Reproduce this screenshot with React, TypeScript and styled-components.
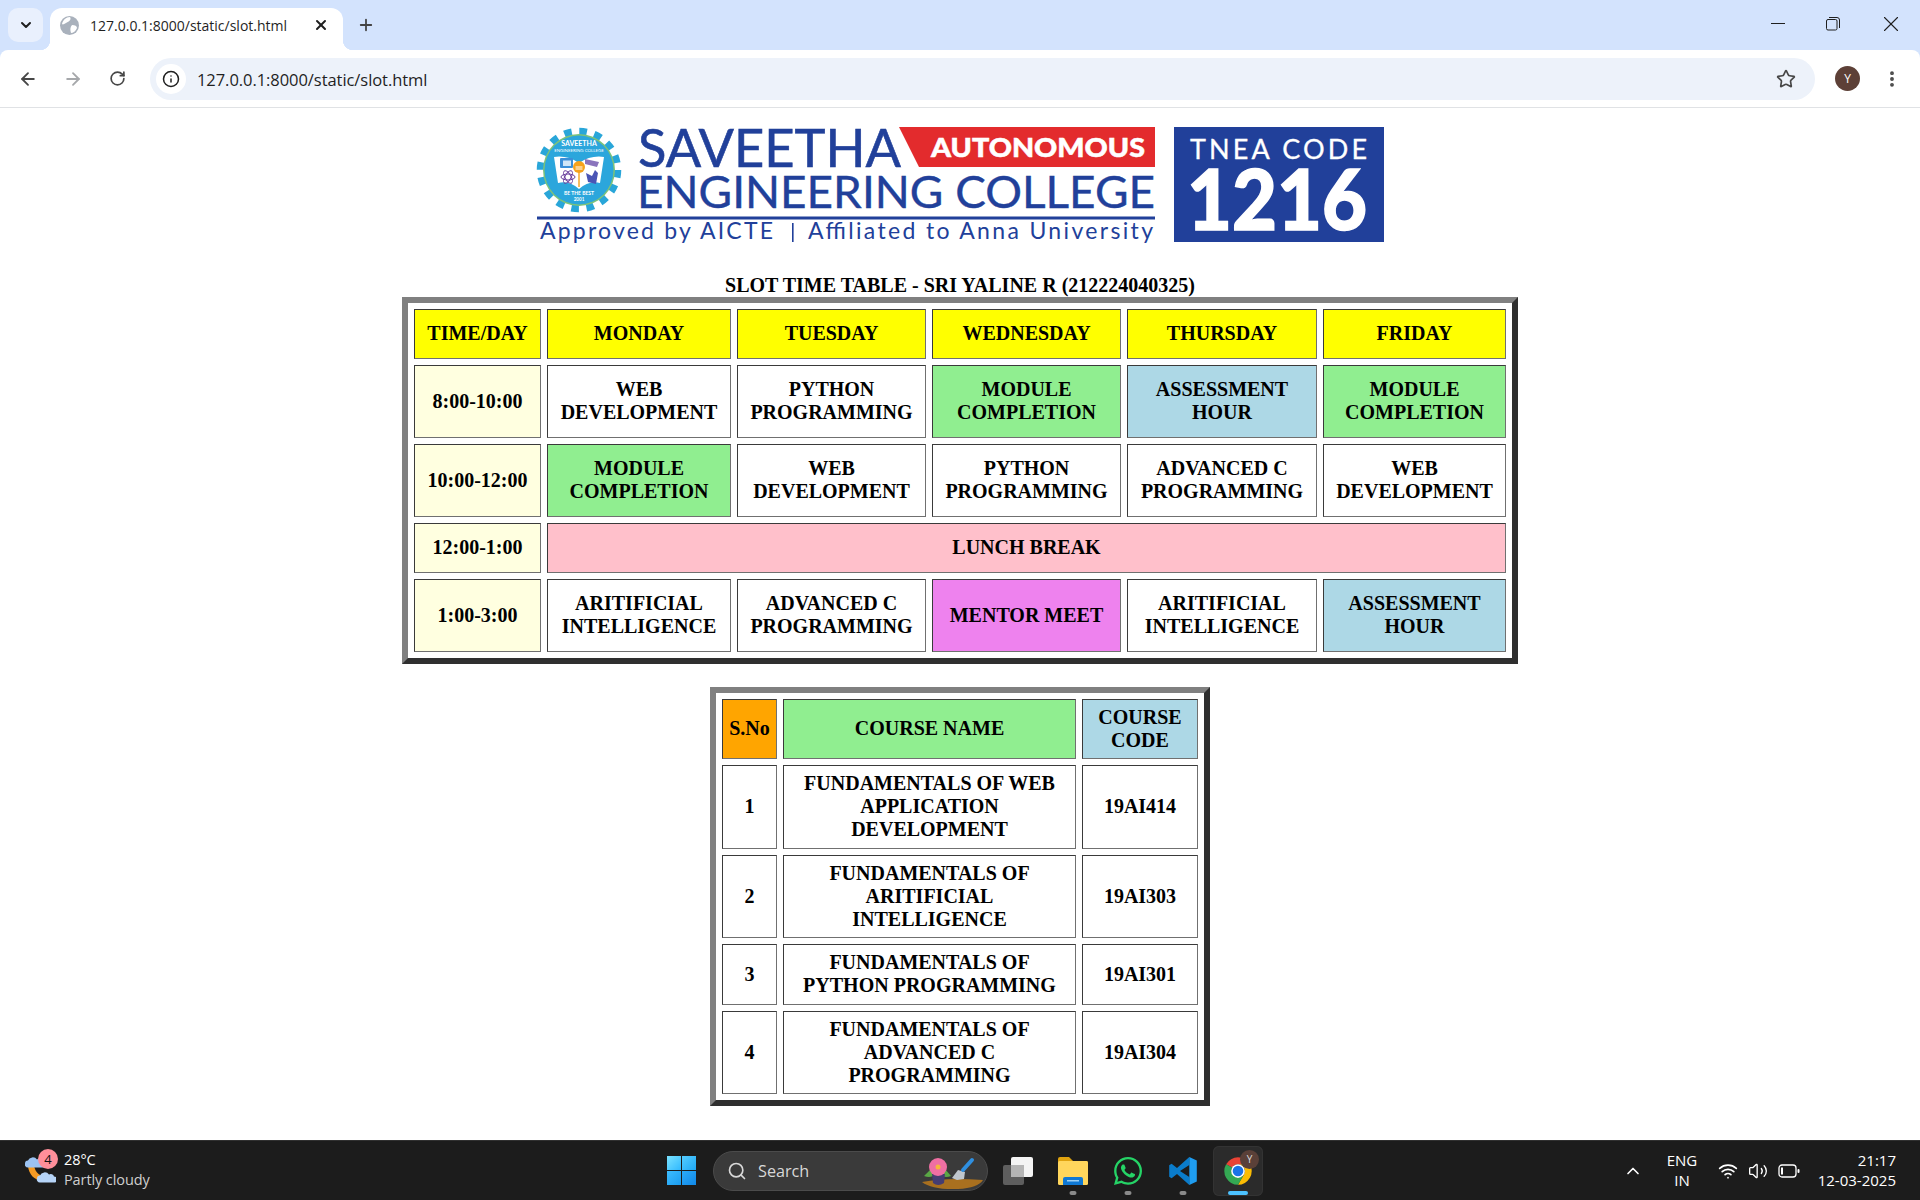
import React from "react";
import styled, { createGlobalStyle } from "styled-components";
import {
  ArrowLeft,
  ArrowRight,
  ChevronDown,
  ChevronUp,
  EllipsisVertical,
  Info,
  Plus,
  RotateCw,
  Search,
  Star,
  Volume2,
  Wifi,
  X,
} from "lucide-react";
import { FaWhatsapp } from "react-icons/fa";

const Global = createGlobalStyle`
  html, body { margin: 0; padding: 0; background: #fff; }
`;

const UI = `"Open Sans", "Noto Sans", sans-serif`;

const Screen = styled.div`
  width: 1920px;
  height: 1200px;
  display: flex;
  flex-direction: column;
  overflow: hidden;
  background: #d3e3fd;
  font-family: ${UI};
`;

/* ---------- tab strip ---------- */
const TabStrip = styled.div`
  height: 50px;
  flex: none;
  display: flex;
  align-items: flex-start;
  padding-left: 8px;
  color: #1f1f1f;
`;
const TabMenu = styled.div`
  width: 35px;
  height: 34px;
  margin-top: 8px;
  border-radius: 10px;
  background: #e9f0fd;
  display: flex;
  align-items: center;
  justify-content: center;
`;
const Tab = styled.div`
  position: relative;
  width: 293px;
  height: 42px;
  margin: 8px 0 0 7px;
  padding: 0 14px 8px 10px;
  box-sizing: border-box;
  background: #fff;
  border-radius: 12px 12px 0 0;
  display: flex;
  align-items: center;
  &::before,
  &::after {
    content: "";
    position: absolute;
    bottom: 0;
    width: 10px;
    height: 10px;
  }
  &::before {
    left: -10px;
    background: radial-gradient(circle at 0 0, transparent 10px, #fff 10.5px);
  }
  &::after {
    right: -10px;
    background: radial-gradient(circle at 100% 0, transparent 10px, #fff 10.5px);
  }
`;
const TabTitle = styled.span`
  margin-left: 11px;
  flex: 1;
  font-size: 14px;
  white-space: nowrap;
`;
const NewTab = styled.div`
  width: 24px;
  height: 34px;
  margin: 8px 0 0 11px;
  display: flex;
  align-items: center;
  justify-content: center;
`;
const WindowControls = styled.div`
  margin-left: auto;
  display: flex;
  height: 48px;
  align-items: center;
`;
const WindowButton = styled.div<{ $w: number }>`
  width: ${(p) => p.$w}px;
  display: flex;
  justify-content: center;
  color: #1f1f1f;
`;

/* ---------- toolbar ---------- */
const Toolbar = styled.div`
  height: 57px;
  flex: none;
  background: #fff;
  border-radius: 8px 8px 0 0;
  border-bottom: 1px solid #e0e2e5;
  display: flex;
  align-items: center;
  padding-left: 5px;
  box-sizing: content-box;
`;
const NavButton = styled.div<{ $muted?: boolean }>`
  width: 45px;
  height: 42px;
  display: flex;
  align-items: center;
  justify-content: center;
  color: ${(p) => (p.$muted ? "#a6a8ab" : "#474747")};
`;
const AddressBar = styled.div`
  flex: 1;
  height: 42px;
  margin-left: 10px;
  padding: 0 19px 0 6px;
  background: #edf2fa;
  border-radius: 21px;
  display: flex;
  align-items: center;
  color: #1f1f1f;
`;
const InfoChip = styled.div`
  width: 30px;
  height: 30px;
  border-radius: 50%;
  background: #fff;
  display: flex;
  align-items: center;
  justify-content: center;
  flex: none;
`;
const Url = styled.span`
  margin-left: 11px;
  padding-top: 1px;
  flex: 1;
  font-size: 16.5px;
  letter-spacing: -0.06px;
  white-space: nowrap;
`;
const ToolbarEnd = styled.div`
  width: 105px;
  flex: none;
  display: flex;
  align-items: center;
  padding-left: 20px;
  box-sizing: border-box;
  color: #474747;
`;
const Avatar = styled.div`
  width: 25px;
  height: 25px;
  border-radius: 50%;
  background: #5d4037;
  color: #fff;
  font-size: 12px;
  display: flex;
  align-items: center;
  justify-content: center;
`;
const Kebab = styled.div`
  margin-left: 22px;
  display: flex;
`;

/* ---------- page ---------- */
const Page = styled.main`
  flex: 1;
  background: #fff;
  display: flex;
  flex-direction: column;
  align-items: center;
  padding-top: 17px;
  font-family: "Liberation Serif", "Times New Roman", serif;
  min-height: 0;
`;
const LogoSvg = styled.svg`
  display: block;
  flex: none;
  margin-bottom: 31px;
`;
const Table = styled.table<{ $width: number }>`
  width: ${(p) => p.$width}px;
  table-layout: fixed;
  border-collapse: separate;
  border-spacing: 6px;
  border-width: 6px;
  border-style: solid;
  border-color: #808080 #2f2f2f #2f2f2f #808080;
  box-sizing: border-box;
  flex: none;
  color: #000;
  font-size: 20px;
  line-height: 23px;
  font-weight: 700;
`;
const SecondTable = styled(Table)`
  margin-top: 23px;
`;
const Caption = styled.caption`
  font-weight: 700;
  font-size: 20px;
  line-height: 23px;
  text-align: center;
  white-space: nowrap;
`;
const Cell = styled.td<{ $bg?: string; $top: number; $bottom: number; $h?: number }>`
  padding: ${(p) => p.$top}px 2px ${(p) => p.$bottom}px;
  box-sizing: border-box;
  border-width: 1px;
  border-style: solid;
  border-color: #3a3a3a #707070 #707070 #3a3a3a;
  background: ${(p) => p.$bg ?? "#fff"};
  text-align: center;
  vertical-align: middle;
  white-space: pre-line;
  height: ${(p) => (p.$h ? `${p.$h}px` : "auto")};
`;

const YELLOW = "#ffff00";
const CREAM = "#ffffe0";
const GREEN = "#90ee90";
const BLUE = "#add8e6";
const PINK = "#ffc0cb";
const VIOLET = "#ee82ee";
const ORANGE = "#ffa500";

type Slot = { text: string; bg?: string; span?: number };
const slotColumns = [127, 184, 189, 189, 190, 183];
const slotRows: Slot[][] = [
  [
    { text: "TIME/DAY", bg: YELLOW },
    { text: "MONDAY", bg: YELLOW },
    { text: "TUESDAY", bg: YELLOW },
    { text: "WEDNESDAY", bg: YELLOW },
    { text: "THURSDAY", bg: YELLOW },
    { text: "FRIDAY", bg: YELLOW },
  ],
  [
    { text: "8:00-10:00", bg: CREAM },
    { text: "WEB\nDEVELOPMENT" },
    { text: "PYTHON\nPROGRAMMING" },
    { text: "MODULE\nCOMPLETION", bg: GREEN },
    { text: "ASSESSMENT\nHOUR", bg: BLUE },
    { text: "MODULE\nCOMPLETION", bg: GREEN },
  ],
  [
    { text: "10:00-12:00", bg: CREAM },
    { text: "MODULE\nCOMPLETION", bg: GREEN },
    { text: "WEB\nDEVELOPMENT" },
    { text: "PYTHON\nPROGRAMMING" },
    { text: "ADVANCED C\nPROGRAMMING" },
    { text: "WEB\nDEVELOPMENT" },
  ],
  [
    { text: "12:00-1:00", bg: CREAM },
    { text: "LUNCH BREAK", bg: PINK, span: 5 },
  ],
  [
    { text: "1:00-3:00", bg: CREAM },
    { text: "ARITIFICIAL\nINTELLIGENCE" },
    { text: "ADVANCED C\nPROGRAMMING" },
    { text: "MENTOR MEET", bg: VIOLET },
    { text: "ARITIFICIAL\nINTELLIGENCE" },
    { text: "ASSESSMENT\nHOUR", bg: BLUE },
  ],
];
const courseColumns = [55, 293, 116];
const courseHeights = [60, 84, 83, 61, 83];
const courseRows: Slot[][] = [
  [
    { text: "S.No", bg: ORANGE },
    { text: "COURSE NAME", bg: GREEN },
    { text: "COURSE\nCODE", bg: BLUE },
  ],
  [{ text: "1" }, { text: "FUNDAMENTALS OF WEB\nAPPLICATION\nDEVELOPMENT" }, { text: "19AI414" }],
  [{ text: "2" }, { text: "FUNDAMENTALS OF\nARITIFICIAL\nINTELLIGENCE" }, { text: "19AI303" }],
  [{ text: "3" }, { text: "FUNDAMENTALS OF\nPYTHON PROGRAMMING" }, { text: "19AI301" }],
  [{ text: "4" }, { text: "FUNDAMENTALS OF\nADVANCED C\nPROGRAMMING" }, { text: "19AI304" }],
];

function Rows({
  rows,
  top,
  bottom,
  heights,
}: {
  rows: Slot[][];
  top: number;
  bottom: number;
  heights?: number[];
}) {
  return (
    <tbody>
      {rows.map((row, i) => (
        <tr key={i}>
          {row.map((c, j) => (
            <Cell key={j} $bg={c.bg} $top={top} $bottom={bottom} $h={heights?.[i]} colSpan={c.span}>
              {c.text}
            </Cell>
          ))}
        </tr>
      ))}
    </tbody>
  );
}
function Cols({ widths }: { widths: number[] }) {
  return (
    <colgroup>
      {widths.map((w, i) => (
        <col key={i} width={w} />
      ))}
    </colgroup>
  );
}

function Logo() {
  const f = "Lato, 'Open Sans', sans-serif";
  return (
    <LogoSvg width={850} height={118} viewBox="0 0 850 118">
      <g transform="translate(44 45)">
        <circle r={38.5} fill="none" stroke="#29a6d9" strokeWidth={7.5} strokeDasharray="7.56 7.56" />
        <circle r={36} fill="#7cc27a" />
        <circle r={34.5} fill="#2ba6dc" />
        <path d="M-25 -13 Q-12 -15 0 -7 Q12 -15 25 -13 L21 13 Q10 10 0 19 Q-10 10 -21 13 Z" fill="#fff" />
        <rect x={-19} y={-12} width={13} height={10} rx={1} fill="#3a8fd8" />
        <rect x={-16} y={-9.5} width={8} height={5.5} fill="#cfe6f7" />
        <g fill="none" stroke="#6a3f9c" strokeWidth={1}>
          <ellipse cx={-11} cy={7} rx={7} ry={3} />
          <ellipse cx={-11} cy={7} rx={7} ry={3} transform="rotate(60 -11 7)" />
          <ellipse cx={-11} cy={7} rx={7} ry={3} transform="rotate(-60 -11 7)" />
        </g>
        <path d="M6 -11 L20 -8 L18 -3 L6 -6 Z" fill="#8a74bc" />
        <path d="M7 3 L13 6 L16 0 L19 3 L17 14 L9 12 Z" fill="#4a55b5" />
        <circle cy={-3} r={6} fill="#f5a21b" />
        <path d="M-3.5 -3 H3.5 M-3.5 -1 H3.5" stroke="#fff" strokeWidth={1} />
        <rect x={-0.7} y={2} width={1.4} height={15} fill="#f5a21b" />
        <text y={-24.5} textAnchor="middle" fontFamily={f} fontWeight={700} fontSize={7} fill="#fff">SAVEETHA</text>
        <text y={-18.5} textAnchor="middle" fontFamily={f} fontSize={4.4} fill="#fff">ENGINEERING COLLEGE</text>
        <text y={25} textAnchor="middle" fontFamily={f} fontWeight={700} fontSize={5} fill="#fff">BE THE BEST</text>
        <text y={30.5} textAnchor="middle" fontFamily={f} fontWeight={700} fontSize={4.6} fill="#fff">2001</text>
      </g>
      <text x={103} y={42} fontFamily={f} fontSize={53} fill="#21409a" stroke="#21409a" strokeWidth={0.6} textLength={263} lengthAdjust="spacingAndGlyphs">SAVEETHA</text>
      <polygon points="364,2 620,2 620,42 384,42" fill="#e32b2d" />
      <text x={396} y={32} fontFamily={f} fontWeight={900} fontSize={26} fill="#fff" stroke="#fff" strokeWidth={0.5} textLength={214} lengthAdjust="spacingAndGlyphs">AUTONOMOUS</text>
      <text x={102} y={83} fontFamily={f} fontSize={45} fill="#21409a" stroke="#21409a" strokeWidth={0.4} textLength={518} lengthAdjust="spacingAndGlyphs">ENGINEERING COLLEGE</text>
      <rect x={2} y={91.5} width={618} height={3} fill="#21409a" />
      <text x={5} y={114} fontFamily={f} fontSize={23} fill="#21409a" textLength={233} lengthAdjust="spacing">Approved by AICTE</text>
      <rect x={257} y={98} width={1.6} height={19} fill="#21409a" />
      <text x={273} y={114} fontFamily={f} fontSize={23} fill="#21409a" textLength={345} lengthAdjust="spacing">Affiliated to Anna University</text>
      <rect x={639} y={2} width={210} height={115} fill="#21409a" />
      <text x={655} y={34} fontFamily={f} fontSize={27} fill="#fff" stroke="#fff" strokeWidth={0.3} textLength={177} lengthAdjust="spacing">TNEA CODE</text>
      <text x={652} y={105} fontFamily={f} fontWeight={900} fontSize={84} fill="#fff" stroke="#fff" strokeWidth={1.5} textLength={180} lengthAdjust="spacingAndGlyphs">1216</text>
    </LogoSvg>
  );
}

/* ---------- taskbar ---------- */
const Taskbar = styled.footer`
  height: 59px;
  flex: none;
  background: #1c1c1c;
  border-top: 1px solid #303030;
  display: flex;
  align-items: center;
  padding-left: 25px;
  color: #fff;
  font-family: ${UI};
`;
const Weather = styled.div`
  width: 642px;
  flex: none;
  display: flex;
  align-items: center;
`;
const WeatherIcon = styled.div`
  position: relative;
  width: 39px;
  height: 42px;
  flex: none;
`;
const WeatherArtSvg = styled.svg`
  position: absolute;
  left: 0;
  top: 6px;
`;
const Badge = styled.span`
  position: absolute;
  right: 6px;
  top: -1px;
  width: 20px;
  height: 20px;
  border-radius: 50%;
  background: #ff8f9a;
  color: #111;
  font-size: 13px;
  line-height: 20px;
  text-align: center;
`;
const WeatherText = styled.div`
  display: flex;
  flex-direction: column;
  font-size: 14.5px;
  line-height: 20px;
  letter-spacing: -0.1px;
  margin-top: -2px;
`;
const Muted = styled.span`
  color: #cfcfcf;
`;
const Center = styled.div`
  width: 595px;
  flex: none;
  display: flex;
  align-items: center;
`;
const StartButton = styled.div`
  width: 29px;
  height: 29px;
  display: grid;
  grid-template-columns: 1fr 1fr;
  gap: 1.5px;
  flex: none;
`;
const StartPane = styled.span<{ $bg: string }>`
  background: ${(p) => p.$bg};
`;
const SearchBox = styled.div`
  width: 275px;
  height: 40px;
  margin-left: 17px;
  box-sizing: border-box;
  border: 1px solid #4b4b4b;
  border-radius: 20px;
  background: #3a3a3a;
  display: flex;
  align-items: center;
  padding: 0 3px 0 13px;
  color: #d8d8d8;
  font-size: 16.2px;
  flex: none;
`;
const SearchLabel = styled.span`
  margin-left: 11px;
  flex: 1;
`;
const GardenSvg = styled.svg`
  margin-top: 5px;
  flex: none;
`;
const AppSlot = styled.div<{ $active?: boolean }>`
  position: relative;
  width: 50px;
  height: 50px;
  margin-left: 5px;
  border-radius: 6px;
  display: flex;
  align-items: center;
  justify-content: center;
  flex: none;
  background: ${(p) => (p.$active ? "#2b2b2b" : "transparent")};
  box-shadow: ${(p) => (p.$active ? "inset 0 0 0 1px #333" : "none")};
`;
const Pip = styled.span<{ $active?: boolean }>`
  position: absolute;
  bottom: 1px;
  left: 50%;
  transform: translateX(-50%);
  height: 4px;
  border-radius: 2px;
  width: ${(p) => (p.$active ? 20 : 7)}px;
  background: ${(p) => (p.$active ? "#4cc2ff" : "#8a8a8a")};
`;
const SmallAvatar = styled.span`
  position: absolute;
  top: 4px;
  right: 4px;
  width: 19px;
  height: 19px;
  border-radius: 50%;
  background: #5a4038;
  color: #ddd;
  font-size: 10px;
  line-height: 19px;
  text-align: center;
`;
const Tray = styled.div`
  flex: 1;
  display: flex;
  align-items: center;
  padding-right: 24px;
  font-size: 15px;
  line-height: 20px;
`;
const TrayChevron = styled.div`
  margin-left: 358px;
  display: flex;
  width: 26px;
  justify-content: center;
`;
const Lang = styled.div`
  margin-left: 14px;
  width: 44px;
  text-align: center;
  margin-top: -2px;
`;
const TrayIcons = styled.div`
  margin-left: 14px;
  display: flex;
  align-items: center;
  gap: 10px;
`;
const Clock = styled.div`
  margin-left: auto;
  text-align: right;
  margin-top: -2px;
`;

const Restore = () => (
  <svg width="14" height="14" viewBox="0 0 14 14" fill="none" stroke="currentColor" strokeWidth="1">
    <rect x="0.5" y="2.5" width="10.5" height="10.5" rx="1.5" />
    <path d="M3 0.5h8a2.5 2.5 0 0 1 2.5 2.5v8" />
  </svg>
);
const Globe = () => (
  <svg width="19" height="19" viewBox="0 0 19 19">
    <circle cx="9.5" cy="9.5" r="9.5" fill="#a9b1bc" />
    <path d="M10 1 C12 4 8 6 6 7 C4 8 3 9 2 8 C3 4 6 1 10 1Z M12 9 C15 9 17 10 17 12 C16 15 13 17 11 17 C10 14 10 11 12 9Z" fill="#fff" />
  </svg>
);
const WeatherArt = () => (
  <WeatherArtSvg width="31" height="28" viewBox="0 0 31 28">
    <path d="M3 10 C4 22 16 29 24 21 C15 21 10 17 9 9 Z" fill="#f59a23" />
    <path d="M0 7.5 a3 3 0 0 1 3-3 a5 4.5 0 0 1 9-1 a3.5 3.5 0 0 1 6 2 a3 3 0 0 1 0 6 H3 a3 3 0 0 1 -3-4Z" fill="#9cc3f2" />
    <path d="M12 22.5 a3 3 0 0 1 3-3 a5 4.5 0 0 1 9-1 a3.5 3.5 0 0 1 5 2 a3 3 0 0 1 0 6 H15 a3 3 0 0 1 -3-4Z" fill="#b6d4f7" />
  </WeatherArtSvg>
);
const TaskView = () => (
  <svg width="30" height="28" viewBox="0 0 30 28">
    <rect x="0" y="8" width="21" height="20" rx="2" fill="#5e5e5e" />
    <rect x="8" y="0" width="22" height="20" rx="2" fill="#f4f4f4" />
    <rect x="8" y="8" width="13" height="12" fill="#b5b5b5" />
  </svg>
);
const Folder = () => (
  <svg width="30" height="28" viewBox="0 0 30 28">
    <path d="M0 2 a2 2 0 0 1 2-2 h9 l4 4 h13 a2 2 0 0 1 2 2 v4 H0Z" fill="#e0a30f" />
    <rect x="0" y="4" width="30" height="24" rx="1.5" fill="#ffd65c" />
    <path d="M5 28 v-6 a2 2 0 0 1 2-2 h16 a2 2 0 0 1 2 2 v6Z" fill="#0f78d4" />
    <rect x="9" y="23" width="12" height="1.5" fill="#9bd0f5" />
  </svg>
);
const VsCode = () => (
  <svg width="30" height="30" viewBox="0 0 100 100">
    <path d="M71 3 L30 40 L12 26 L4 31 V69 L12 74 L30 60 L71 97 V70 L40 50 L71 30 Z" fill="#0a7ccb" />
    <path d="M71 3 L96 15 V85 L71 97 Z" fill="#1f9df0" />
  </svg>
);
const Chrome = () => (
  <svg width="30" height="30" viewBox="0 0 48 48">
    <path d="M5 13 A22 22 0 0 1 43 13 L24 13 A11 11 0 0 0 14.5 18.5 Z" fill="#ea4335" />
    <path d="M43 13 A22 22 0 0 1 24 46 L33.5 29.5 A11 11 0 0 0 24 13 Z" fill="#fbbc04" />
    <path d="M24 46 A22 22 0 0 1 5 13 L14.5 18.5 A11 11 0 0 0 33.5 29.5 Z" fill="#34a853" />
    <circle cx="24" cy="24" r="11" fill="#fff" />
    <circle cx="24" cy="24" r="8.5" fill="#1a73e8" />
  </svg>
);
const Garden = () => (
  <GardenSvg width="62" height="33" viewBox="0 0 62 33">
    <path d="M0 25 Q25 20 61 23 Q56 31 36 32 Q10 33 0 25Z" fill="#a9701f" />
    <path d="M9 12 L2 19 Q10 22 14 16Z M23 12 L29 19 Q21 22 18 16Z" fill="#5aa845" />
    <path d="M10 17 H23 L22 26 Q16 30 11 26 Z" fill="#453d72" />
    <circle cx="16" cy="10" r="9" fill="#ef6fa3" />
    <circle cx="16" cy="10" r="2.5" fill="#f6b73c" />
    <path d="M30 21 L36 13 L43 15 L42 22 L35 23 Z" fill="#bfc6cc" />
    <path d="M41 13 L50 3" stroke="#2f8fe0" strokeWidth="4" strokeLinecap="round" />
  </GardenSvg>
);

export default function App() {
  return (
    <Screen>
      <Global />
      <TabStrip>
        <TabMenu>
          <ChevronDown size={16} strokeWidth={3} />
        </TabMenu>
        <Tab>
          <Globe />
          <TabTitle>127.0.0.1:8000/static/slot.html</TabTitle>
          <X size={16} strokeWidth={3} />
        </Tab>
        <NewTab>
          <Plus size={18} strokeWidth={2.4} color="#444" />
        </NewTab>
        <WindowControls>
          <WindowButton $w={52}>
            <svg width="14" height="2" viewBox="0 0 14 2"><rect width="14" height="1" fill="currentColor" /></svg>
          </WindowButton>
          <WindowButton $w={58}>
            <Restore />
          </WindowButton>
          <WindowButton $w={58}>
            <X size={26} strokeWidth={1} />
          </WindowButton>
        </WindowControls>
      </TabStrip>
      <Toolbar>
        <NavButton><ArrowLeft size={20} strokeWidth={2.2} /></NavButton>
        <NavButton $muted><ArrowRight size={20} strokeWidth={2.2} /></NavButton>
        <NavButton><RotateCw size={17} strokeWidth={2.4} /></NavButton>
        <AddressBar>
          <InfoChip><Info size={18} strokeWidth={2} /></InfoChip>
          <Url>127.0.0.1:8000/static/slot.html</Url>
          <Star size={20} strokeWidth={2} color="#474747" />
        </AddressBar>
        <ToolbarEnd>
          <Avatar>Y</Avatar>
          <Kebab><EllipsisVertical size={20} strokeWidth={2.6} /></Kebab>
        </ToolbarEnd>
      </Toolbar>
      <Page>
        <Logo />
        <Table $width={1116}>
          <Caption>SLOT TIME TABLE - SRI YALINE R (212224040325)</Caption>
          <Cols widths={slotColumns} />
          <Rows rows={slotRows} top={12} bottom={13} />
        </Table>
        <SecondTable $width={500}>
          <Cols widths={courseColumns} />
          <Rows rows={courseRows} top={5.75} bottom={6.25} heights={courseHeights} />
        </SecondTable>
      </Page>
      <Taskbar>
        <Weather>
          <WeatherIcon>
            <WeatherArt />
            <Badge>4</Badge>
          </WeatherIcon>
          <WeatherText>
            <span>28°C</span>
            <Muted>Partly cloudy</Muted>
          </WeatherText>
        </Weather>
        <Center>
          <StartButton>
            <StartPane $bg="linear-gradient(135deg,#7be3ff,#2fb8ff)" />
            <StartPane $bg="linear-gradient(135deg,#55ccff,#1ea8f5)" />
            <StartPane $bg="linear-gradient(135deg,#3dbdff,#1a9cf0)" />
            <StartPane $bg="linear-gradient(135deg,#2cabf8,#1088e8)" />
          </StartButton>
          <SearchBox>
            <Search size={20} strokeWidth={2} />
            <SearchLabel>Search</SearchLabel>
            <Garden />
          </SearchBox>
          <AppSlot><TaskView /></AppSlot>
          <AppSlot><Folder /><Pip /></AppSlot>
          <AppSlot><FaWhatsapp size={32} color="#25d366" /><Pip /></AppSlot>
          <AppSlot><VsCode /><Pip /></AppSlot>
          <AppSlot $active><Chrome /><SmallAvatar>Y</SmallAvatar><Pip $active /></AppSlot>
        </Center>
        <Tray>
          <TrayChevron><ChevronUp size={20} strokeWidth={2} /></TrayChevron>
          <Lang>ENG<br />IN</Lang>
          <TrayIcons>
            <Wifi size={20} strokeWidth={2} />
            <Volume2 size={20} strokeWidth={1.6} />
            <svg width="22" height="14" viewBox="0 0 22 14" fill="none" stroke="currentColor" strokeWidth="1.3">
              <rect x="1" y="1" width="17" height="12" rx="3" />
              <rect x="3" y="3.5" width="2" height="7" fill="currentColor" stroke="none" />
              <rect x="19.5" y="5" width="2" height="4" rx="1" fill="currentColor" stroke="none" />
            </svg>
          </TrayIcons>
          <Clock>21:17<br />12-03-2025</Clock>
        </Tray>
      </Taskbar>
    </Screen>
  );
}
